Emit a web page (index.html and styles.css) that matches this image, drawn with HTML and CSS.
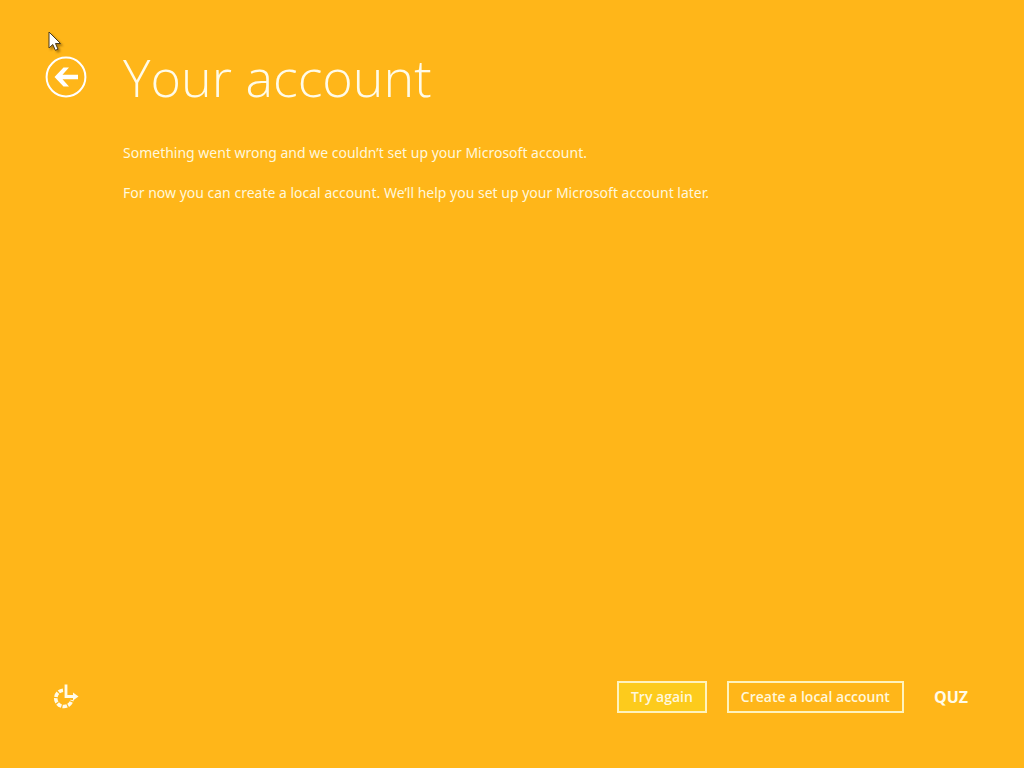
FILE: index.html
```
<!DOCTYPE html>
<html lang="en">
<head>
    <meta charset="UTF-8">
    <meta name="viewport" content="width=device-width, initial-scale=1.0">
    <title>Your account</title>
    <link rel="stylesheet" href="styles.css">
</head>
<body>
    <div class="page">
        <header class="header">
            <button class="back" type="button" aria-label="Back">
                <svg viewBox="0 0 42 42" width="42" height="42">
                    <circle cx="21" cy="21" r="19.4" fill="none" stroke="#fff" stroke-width="2"/>
                    <path d="M9.500 21 18.500 11.500H24L17.500 18.700H33V23.300H17.500L24 30.500H18.500Z" fill="#fff"/>
                </svg>
            </button>
            <h1 class="title">Your account</h1>
        </header>
        <main class="content">
            <p>Something went wrong and we couldn’t set up your Microsoft account.</p>
            <p>For now you can create a local account. We’ll help you set up your Microsoft account later.</p>
        </main>
        <footer class="footer">
            <button class="access" type="button" aria-label="Ease of access">
                <svg viewBox="0 0 28 28" width="28" height="28" fill="none" stroke="#fffbe8">
                    <path d="M11 7.200A8.200 8.200 0 1 0 20 17" stroke-width="3.600" stroke-dasharray="4.600 1.200"/>
                    <path d="M14 1.500V13.500H22" stroke-width="2.800"/>
                    <path d="M21 9.500 26.500 13.500 21 17.500Z" fill="#fffbe8" stroke="none"/>
                </svg>
            </button>
            <div class="actions">
                <button class="btn primary" type="button">Try again</button>
                <button class="btn" type="button">Create a local account</button>
                <button class="lang" type="button">QUZ</button>
            </div>
        </footer>
    </div>
    <!-- mouse pointer -->
    <svg class="cursor" viewBox="0 0 14 21" width="14" height="21">
        <path d="M1 1V17L4.800 13.500 7.300 19.300 10 18.200 7.500 12.500H12.500Z" fill="#fff" stroke="#4a3a1c" stroke-width="1"/>
    </svg>
</body>
</html>
```
FILE: styles.css
```
*{
    padding: 0;
    margin: 0;
    box-sizing: border-box;
}
body{
    background-color: #ffb619;
    color: #fff8dc;
    font-family: "Noto Sans", "Open Sans", sans-serif;
    font-size: 14px;
    line-height: 20px;
}
button{
    border: none;
    background: none;
    color: inherit;
    font: inherit;
    cursor: pointer;
}
svg{
    display: block;
}
.page{
    display: flex;
    flex-direction: column;
    min-height: 100vh;
    padding: 41px 56px 55px 45px;
}
.header{
    display: flex;
    align-items: center;
    gap: 36px;
}
.title{
    font-family: "Open Sans", "Noto Sans", sans-serif;
    font-size: 52px;
    line-height: 72px;
    font-weight: 300;
    color: #fffbe8;
}
.content{
    flex: 1;
    padding: 30px 0 0 78px;
}
.content p{
    margin-bottom: 20px;
}
.footer{
    display: flex;
    justify-content: space-between;
    align-items: center;
}
.access{
    margin-left: 7px;
}
.actions{
    display: flex;
    align-items: center;
    gap: 20px;
}
.btn{
    height: 32px;
    padding: 0 12px;
    border: 2px solid #fff3bd;
    font-family: "Open Sans", "Noto Sans", sans-serif;
    font-weight: 600;
}
.primary{
    background-color: #fdcb1c;
}
.lang{
    margin-left: 10px;
    font-family: "Open Sans", "Noto Sans", sans-serif;
    font-size: 16px;
    font-weight: 700;
    color: #fffbe8;
}
.cursor{
    position: absolute;
    top: 31px;
    left: 48px;
    filter: drop-shadow(2px 2px 1px rgba(90, 60, 0, 0.5));
}
```
